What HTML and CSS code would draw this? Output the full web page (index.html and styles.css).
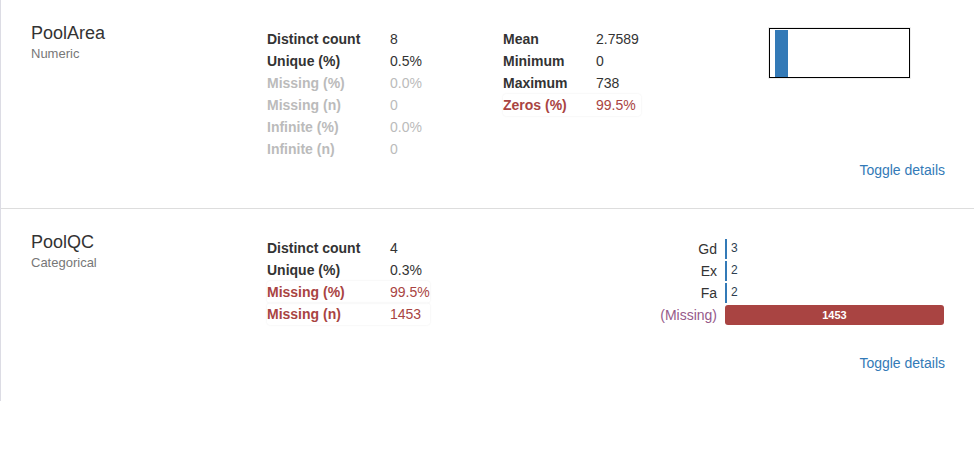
FILE: index.html
```html
<!DOCTYPE html>
<html lang="en">
<head>
<meta charset="utf-8">
<title>Variables</title>
<link rel="stylesheet" href="styles.css">
</head>
<body>
<div class="report">
  <section class="var">
    <div class="var-main">
      <div class="var-name">
        <p class="title">PoolArea</p>
        <p class="type">Numeric</p>
      </div>
      <div class="stats stats-a">
        <div class="stat"><span class="k">Distinct count</span><span class="v">8</span></div>
        <div class="stat"><span class="k">Unique (%)</span><span class="v">0.5%</span></div>
        <div class="stat ignore"><span class="k">Missing (%)</span><span class="v">0.0%</span></div>
        <div class="stat ignore"><span class="k">Missing (n)</span><span class="v">0</span></div>
        <div class="stat ignore"><span class="k">Infinite (%)</span><span class="v">0.0%</span></div>
        <div class="stat ignore"><span class="k">Infinite (n)</span><span class="v">0</span></div>
      </div>
      <div class="stats stats-b">
        <div class="stat"><span class="k">Mean</span><span class="v">2.7589</span></div>
        <div class="stat"><span class="k">Minimum</span><span class="v">0</span></div>
        <div class="stat"><span class="k">Maximum</span><span class="v">738</span></div>
        <div class="stat alert"><span class="k">Zeros (%)</span><span class="v">99.5%</span></div>
      </div>
      <div class="chart">
        <div class="hist"><div class="hist-bar"></div></div>
      </div>
    </div>
    <div class="toggle"><a href="#" class="toggle-link">Toggle details</a></div>
  </section>

  <section class="var">
    <div class="var-main">
      <div class="var-name">
        <p class="title">PoolQC</p>
        <p class="type">Categorical</p>
      </div>
      <div class="stats stats-a">
        <div class="stat"><span class="k">Distinct count</span><span class="v">4</span></div>
        <div class="stat"><span class="k">Unique (%)</span><span class="v">0.3%</span></div>
        <div class="stat alert"><span class="k">Missing (%)</span><span class="v">99.5%</span></div>
        <div class="stat alert"><span class="k">Missing (n)</span><span class="v">1453</span></div>
      </div>
      <div class="stats stats-b"></div>
      <div class="chart">
        <div class="freq">
          <div class="freq-row">
            <span class="freq-label">Gd</span>
            <div class="freq-track"><div class="freq-bar" style="width:2px"></div><span class="freq-count">3</span></div>
          </div>
          <div class="freq-row">
            <span class="freq-label">Ex</span>
            <div class="freq-track"><div class="freq-bar" style="width:2px"></div><span class="freq-count">2</span></div>
          </div>
          <div class="freq-row">
            <span class="freq-label">Fa</span>
            <div class="freq-track"><div class="freq-bar" style="width:2px"></div><span class="freq-count">2</span></div>
          </div>
          <div class="freq-row missing">
            <span class="freq-label">(Missing)</span>
            <div class="freq-track"><div class="freq-bar" style="width:100%">1453</div></div>
          </div>
        </div>
      </div>
    </div>
    <div class="toggle"><a href="#" class="toggle-link">Toggle details</a></div>
  </section>
</div>
</body>
</html>
```

FILE: styles.css
```css
html, body {
  margin: 0;
  padding: 0;
  background: #fff;
}

body {
  font-family: "Liberation Sans", Arial, Helvetica, sans-serif;
  font-size: 14px;
  line-height: 20px;
  color: #333;
}

.report {
  border-left: 1px solid #dcdce4;
}

.var {
  padding: 24px 29px 28px 30px;
}

.var:not(:last-child) {
  border-bottom: 1px solid #dddddd;
}

.var-main {
  display: flex;
  align-items: flex-start;
}

.var-name {
  width: 236px;
  flex: none;
}

.title {
  margin: 0;
  font-size: 18px;
  line-height: 19.8px;
  color: #333;
}

.type {
  margin: 0;
  font-size: 13px;
  line-height: 20px;
  color: #777;
}

.stats {
  flex: none;
  margin-top: 4px;
}

.stats-a {
  width: 236px;
}

.stats-b {
  width: 138px;
}

.stat {
  display: flex;
  padding: 1px 0;
  line-height: 20px;
  border-radius: 3px;
}

.stats-a .stat {
  width: 163px;
}

.stats-b .stat {
  width: 138px;
}

.k {
  font-weight: bold;
  flex: none;
}

.stats-a .k {
  width: 123px;
}

.stats-b .k {
  width: 93px;
}

.v {
  flex: 1;
}

.stat.ignore {
  color: #bbbbbb;
}

.stat.alert {
  color: #a94442;
  box-shadow: 0 0 2px rgba(0, 0, 0, 0.09);
}

.chart {
  flex: 1;
  min-width: 0;
}

.hist {
  box-sizing: border-box;
  width: 141px;
  height: 50px;
  margin: 4px 0 0 128px;
  padding: 1px 0 0 5px;
  border: 1px solid #000;
  box-shadow: 0 0 0 1px #eeeeee;
  display: flex;
}

.hist-bar {
  width: 13px;
  height: 100%;
  background: #337ab7;
}

.freq {
  margin: 5px 1px 27px 0;
}

.freq-row {
  display: flex;
  height: 22px;
}

.freq-label {
  flex: none;
  width: 76px;
  padding-right: 8px;
  text-align: right;
  line-height: 22px;
  color: #333;
}

.freq-row.missing .freq-label {
  color: #96598a;
}

.freq-track {
  flex: 1;
  display: flex;
  align-items: flex-start;
}

.freq-bar {
  height: 20px;
  margin-top: 1px;
  background: #337ab7;
}

.freq-row.missing .freq-bar {
  background: #a94442;
  border-radius: 3px;
  color: #fff;
  font-size: 11px;
  font-weight: bold;
  line-height: 20px;
  text-align: center;
}

.freq-count {
  margin-top: 1px;
  padding-left: 4px;
  font-size: 12px;
  line-height: 18px;
  color: #2d3e50;
}

.toggle {
  text-align: right;
  line-height: 20px;
}

.toggle-link {
  color: #337ab7;
  text-decoration: none;
}
```
